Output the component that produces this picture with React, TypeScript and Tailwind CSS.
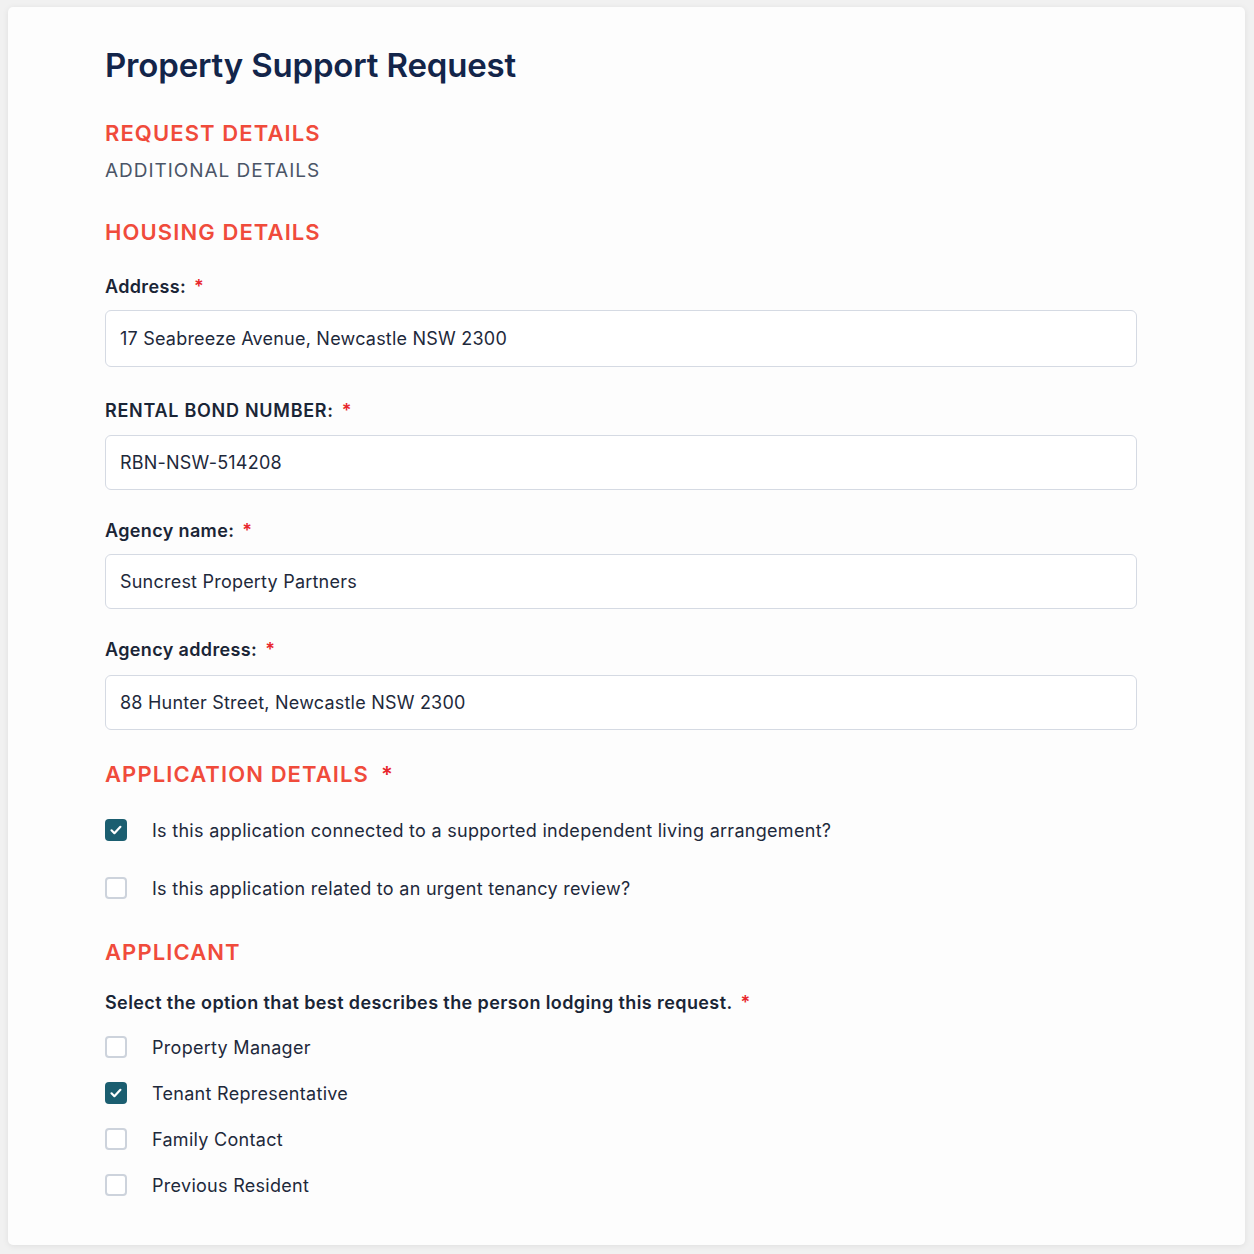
import type { ReactNode } from 'react'

type Field = { label: string; value: string; mt: string; gap: string; upper?: boolean }

const fields: Field[] = [
  { label: 'Address:', value: '17 Seabreeze Avenue, Newcastle NSW 2300', mt: 'mt-[29px]', gap: 'mt-[11px] h-[57px]' },
  { label: 'RENTAL BOND NUMBER:', value: 'RBN-NSW-514208', mt: 'mt-[32px]', gap: 'mt-[12px] h-[55px]', upper: true },
  { label: 'Agency name:', value: 'Suncrest Property Partners', mt: 'mt-[29px]', gap: 'mt-[11px] h-[55px]' },
  { label: 'Agency address:', value: '88 Hunter Street, Newcastle NSW 2300', mt: 'mt-[29px]', gap: 'mt-[13px] h-[55px]' },
]

const applicants = [
  { label: 'Property Manager', checked: false },
  { label: 'Tenant Representative', checked: true },
  { label: 'Family Contact', checked: false },
  { label: 'Previous Resident', checked: false },
]

function Req() {
  return <span className="ml-[8px] text-[#e8262c]">*</span>
}

function SectionHeading({ children, className }: { children: ReactNode; className: string }) {
  return (
    <h2 className={`text-[22px] leading-[28px] font-semibold tracking-[0.05em] text-[#f04b3b] ${className}`}>
      {children}
    </h2>
  )
}

function Box({ checked }: { checked: boolean }) {
  if (checked) {
    return (
      <span className="w-[22px] h-[22px] rounded-[4px] bg-[#1b5e70] flex items-center justify-center flex-shrink-0">
        <svg width="14" height="14" viewBox="0 0 14 14" fill="none">
          <path d="M2.5 7.3l2.9 2.9 6-6.4" stroke="#fff" strokeWidth="2.2" strokeLinecap="round" strokeLinejoin="round" />
        </svg>
      </span>
    )
  }
  return <span className="w-[22px] h-[22px] rounded-[4px] border-2 border-[#cdd3dc] bg-white flex-shrink-0" />
}

function CheckRow({ label, checked, className }: { label: string; checked: boolean; className?: string }) {
  return (
    <label className={`flex items-center gap-[25px] h-[28px] ${className ?? ''}`}>
      <Box checked={checked} />
      <span className="text-[18px] tracking-[0.016em] text-[#1e293b]">{label}</span>
    </label>
  )
}

export default function App() {
  return (
    <div className="min-h-[1254px] bg-[#f1f1f1] pt-[7px] pl-[8px] pr-[9px] pb-[9px] font-['Inter',sans-serif]">
      <div className="h-[1238px] bg-[#fdfdfd] rounded-[5px] shadow-[0_1px_6px_rgba(0,0,0,0.08)] pt-[38px] pl-[97px] pr-[108px]">
        <h1 className="text-[33px] leading-[40px] font-semibold tracking-[-0.005em] text-[#13254a]">
          Property Support Request
        </h1>

        <SectionHeading className="mt-[34px]">REQUEST DETAILS</SectionHeading>
        <p className="mt-[11px] text-[19px] leading-[26px] tracking-[0.05em] text-[#4b5567]">ADDITIONAL DETAILS</p>

        <SectionHeading className="mt-[34px]">HOUSING DETAILS</SectionHeading>

        {fields.map(f => (
          <div key={f.label} className={f.mt}>
            <div
              className={`text-[18px] leading-[24px] font-semibold text-[#1a2536] ${f.upper ? 'tracking-[0.04em]' : 'tracking-[0.02em]'}`}
            >
              {f.label}
              <Req />
            </div>
            <div
              className={`${f.gap} border-[1.5px] border-[#d5dae3] rounded-[6px] bg-white flex items-center px-[14px] text-[18px] tracking-[0.012em] text-[#1e293b]`}
            >
              {f.value}
            </div>
          </div>
        ))}

        <SectionHeading className="mt-[30px]">
          APPLICATION DETAILS
          <span className="ml-[12px] text-[#e8262c]">*</span>
        </SectionHeading>
        <CheckRow
          className="mt-[28px]"
          checked
          label="Is this application connected to a supported independent living arrangement?"
        />
        <CheckRow className="mt-[30px]" checked={false} label="Is this application related to an urgent tenancy review?" />

        <SectionHeading className="mt-[36px]">APPLICANT</SectionHeading>
        <div className="mt-[25px] text-[18px] leading-[24px] font-semibold tracking-[0.022em] text-[#1a2536]">
          Select the option that best describes the person lodging this request.
          <Req />
        </div>
        <div className="mt-[18px] flex flex-col gap-[18px]">
          {applicants.map(a => (
            <CheckRow key={a.label} label={a.label} checked={a.checked} />
          ))}
        </div>
      </div>
    </div>
  )
}
